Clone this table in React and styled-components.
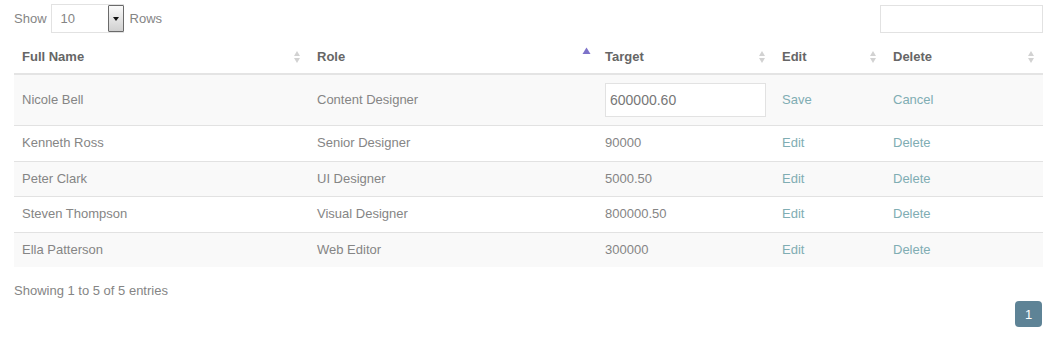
import React from "react";
import styled, { createGlobalStyle } from "styled-components";

const Global = createGlobalStyle`
  html, body { margin: 0; padding: 0; background: #fff; }
  body { font-family: "Liberation Sans", Arial, sans-serif; font-size: 13px; color: #858585; }
`;

const Page = styled.div`
  padding: 4px 13px 0 14px;
`;

const TopBar = styled.div`
  display: flex;
  justify-content: space-between;
  align-items: center;
  height: 29px;
`;

const LengthControl = styled.div`
  display: flex;
  align-items: center;
  color: #858585;
`;

const SelectBox = styled.div`
  display: flex;
  align-items: stretch;
  width: 73px;
  height: 29px;
  margin: 0 6px 0 4px;
  box-sizing: border-box;
  border: 1px solid #e2e2e2;
  background: #fff;
`;

const SelectValue = styled.span`
  flex: 1;
  display: flex;
  align-items: center;
  padding-left: 9px;
  color: #858585;
  font-size: 13px;
`;

const ArrowButton = styled.span`
  width: 16px;
  margin: 0 -1px 0 0;
  box-sizing: border-box;
  border: 1px solid #6a6a6a;
  border-radius: 1px;
  background: linear-gradient(#fafafa, #d0d0d0);
  display: flex;
  align-items: center;
  justify-content: center;
  &::after {
    content: "";
    border-left: 3px solid transparent;
    border-right: 3px solid transparent;
    border-top: 4px solid #111;
  }
`;

const SearchInput = styled.input`
  width: 163px;
  height: 28px;
  box-sizing: border-box;
  border: 1px solid #e2e2e2;
  outline: none;
  font-family: inherit;
`;

const Table = styled.table`
  width: 100%;
  margin-top: 6px;
  border-collapse: collapse;
  table-layout: fixed;
`;

const Th = styled.th`
  padding: 8px 8px 6px 8px;
  text-align: left;
  font-weight: bold;
  color: #666;
  font-size: 13px;
  line-height: 20px;
  border-bottom: 2px solid #e4e4e4;
`;

const HeadInner = styled.div`
  display: flex;
  justify-content: space-between;
  align-items: center;
`;

const Tr = styled.tr`
  background: ${(p) => (p.$striped ? "#f9f9f9" : "#fff")};
`;

const Td = styled.td`
  padding: 8px;
  line-height: 18.5px;
  color: #858585;
  vertical-align: middle;
  border-top: 1px solid #e2e2e2;
`;

const LinkText = styled.a`
  color: #80adb3;
  text-decoration: none;
  cursor: pointer;
`;

const EditInput = styled.input`
  width: 161px;
  height: 34px;
  box-sizing: border-box;
  border: 1px solid #e2e2e2;
  padding: 0 4px;
  font-family: inherit;
  font-size: 14px;
  color: #777;
  background: #fff;
  outline: none;
  display: block;
`;

const Footer = styled.div`
  display: flex;
  justify-content: space-between;
  align-items: flex-start;
  margin-top: 16px;
`;

const Info = styled.div`
  line-height: 16px;
  color: #858585;
`;

const PageButton = styled.span`
  margin: 18px 1px 0 0;
  width: 27px;
  height: 26px;
  border-radius: 4px;
  background: #5e8396;
  color: #fff;
  display: flex;
  align-items: center;
  justify-content: center;
  font-size: 13px;
`;

const ActiveSort = styled.svg`
  margin: -7px -2px 0 0;
`;

const SortIcon = ({ active }) =>
  active ? (
    <ActiveSort width="9" height="14" viewBox="0 0 9 14">
      <path d="M4.5 0.5 L8.5 7 L0.5 7 Z" fill="#7d72c9" />
    </ActiveSort>
  ) : (
    <svg width="8" height="14" viewBox="0 0 8 14">
      <path d="M4 1 L7 6 L1 6 Z" fill="#d2d2d2" />
      <path d="M4 13 L7 8 L1 8 Z" fill="#d2d2d2" />
    </svg>
  );

const rows = [
  { name: "Kenneth Ross", role: "Senior Designer", target: "90000" },
  { name: "Peter Clark", role: "UI Designer", target: "5000.50" },
  { name: "Steven Thompson", role: "Visual Designer", target: "800000.50" },
  { name: "Ella Patterson", role: "Web Editor", target: "300000" },
];

const headers = [
  { label: "Full Name", w: 295 },
  { label: "Role", w: 288, active: true },
  { label: "Target", w: 177 },
  { label: "Edit", w: 111 },
  { label: "Delete", w: 158 },
];

export default function App() {
  return (
    <>
      <Global />
      <Page>
        <TopBar>
          <LengthControl>
            <span>Show</span>
            <SelectBox>
              <SelectValue>10</SelectValue>
              <ArrowButton />
            </SelectBox>
            <span>Rows</span>
          </LengthControl>
          <SearchInput type="text" />
        </TopBar>
        <Table>
          <colgroup>
            {headers.map((h) => (
              <col key={h.label} style={{ width: h.w }} />
            ))}
          </colgroup>
          <thead>
            <tr>
              {headers.map((h) => (
                <Th key={h.label}>
                  <HeadInner>
                    <span>{h.label}</span>
                    <SortIcon active={h.active} />
                  </HeadInner>
                </Th>
              ))}
            </tr>
          </thead>
          <tbody>
            <Tr $striped>
              <Td>Nicole Bell</Td>
              <Td>Content Designer</Td>
              <Td>
                <EditInput defaultValue="600000.60" />
              </Td>
              <Td>
                <LinkText>Save</LinkText>
              </Td>
              <Td>
                <LinkText>Cancel</LinkText>
              </Td>
            </Tr>
            {rows.map((r, i) => (
              <Tr key={r.name} $striped={i % 2 === 1}>
                <Td>{r.name}</Td>
                <Td>{r.role}</Td>
                <Td>{r.target}</Td>
                <Td>
                  <LinkText>Edit</LinkText>
                </Td>
                <Td>
                  <LinkText>Delete</LinkText>
                </Td>
              </Tr>
            ))}
          </tbody>
        </Table>
        <Footer>
          <Info>Showing 1 to 5 of 5 entries</Info>
          <PageButton>1</PageButton>
        </Footer>
      </Page>
    </>
  );
}
